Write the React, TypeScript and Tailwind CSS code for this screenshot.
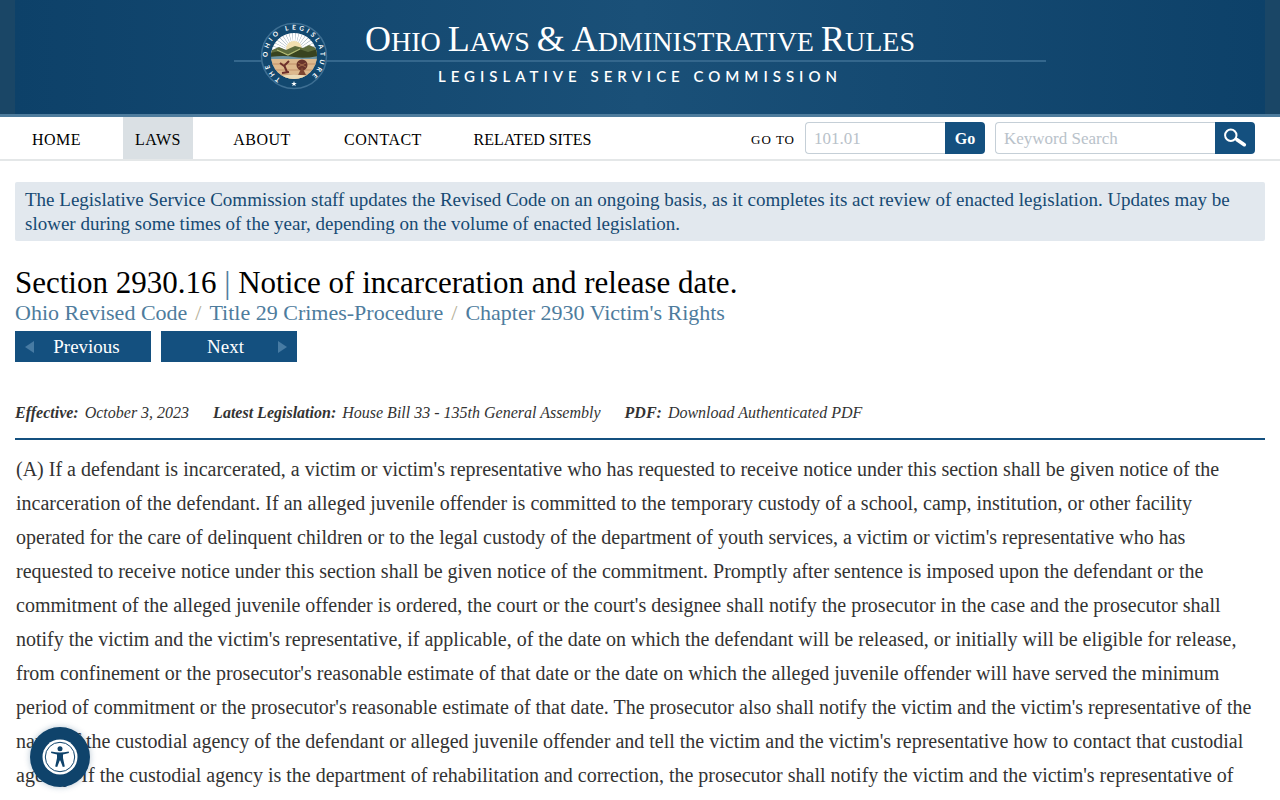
import type { ReactNode } from 'react';

const navItems = [
  { label: 'HOME', style: 'w-[73px] tracking-[0.5px]' },
  { label: 'LAWS', style: 'w-[70px] tracking-[0.5px] bg-[#dae0e4]' },
  { label: 'ABOUT', style: 'w-[78px] tracking-[0.5px]' },
  { label: 'CONTACT', style: 'w-[104px] tracking-[0.5px]' },
  { label: 'RELATED SITES', style: 'w-[135px]' },
];

const breadcrumbs = ['Ohio Revised Code', 'Title 29 Crimes-Procedure', "Chapter 2930 Victim's Rights"];

const details = [
  { label: 'Effective:', value: 'October 3, 2023' },
  { label: 'Latest Legislation:', value: 'House Bill 33 - 135th General Assembly' },
  { label: 'PDF:', value: 'Download Authenticated PDF', href: '#pdf' },
];

const rays = Array.from({ length: 19 }, (_, i) => 180 + i * 10);

const Seal = () => (
  <svg viewBox="0 0 68 68" className="absolute left-[26px] top-[22px] size-[68px]" aria-hidden="true">
    <defs>
      <clipPath id="disc">
        <circle cx="34" cy="34" r="23" />
      </clipPath>
      <path id="ring" d="M21.6 57.3 A26.4 26.4 0 1 1 46.4 57.3" />
    </defs>
    <circle cx="34" cy="34" r="32.5" fill="#12486f" stroke="#3e6f93" strokeWidth="1.5" />
    <g clipPath="url(#disc)">
      <rect x="10" y="10" width="48" height="48" fill="#7f95a6" />
      {rays.map((angle) => (
        <path key={angle} d="M34 30 L60 28 L60 32 Z" fill="#fff" transform={`rotate(${angle} 34 30)`} />
      ))}
      <circle cx="34" cy="27" r="8" fill="#f1dfb0" />
      <path d="M10 29 L19 25 L26 28 L35 24 L43 26 L49 23 L58 27 V38 H10 Z" fill="#5d6b3c" />
      <path d="M10 31 L20 29 L29 33 L39 27 L48 30 L58 27 V36 H10 Z" fill="#38431f" />
      <path d="M17 28 L28 33 L40 27" stroke="#b5bd77" strokeWidth="1.2" fill="none" />
      <path d="M10 35 Q24 33 34 35 T58 34 V38 H10 Z" fill="#6d94a3" />
      <rect x="10" y="37" width="48" height="22" fill="#ddb98d" />
      <path d="M10 42 H58 M12 48 H56 M18 53 H50" stroke="#bf8f68" strokeWidth="1" />
      <path d="M20 41 L24 44 L29 39 M24 43 L27 50 M22 51 L29 50" stroke="#6d2f2b" strokeWidth="2" fill="none" />
      <circle cx="42" cy="43" r="5.5" fill="#6a342b" />
      <path d="M42 45 L38 53 H46 Z" fill="#7d4631" />
      <path d="M38 41 L46 45 M38 45 L46 41" stroke="#a46b4b" strokeWidth="1" />
      <path d="M15 55 Q34 50 53 55 V59 H15 Z" fill="#eadbb8" />
    </g>
    <text fill="#fff" fontSize="6.5" fontWeight="700" fontFamily="Lato, sans-serif" letterSpacing="3">
      <textPath href="#ring" startOffset="1">THE OHIO LEGISLATURE</textPath>
    </text>
    <path d="M34 59 L34.7 61 H36.8 L35.1 62.3 L35.7 64.3 L34 63.1 L32.3 64.3 L32.9 62.3 L31.2 61 H33.3 Z" fill="#fff" />
  </svg>
);

const Cap = ({ children }: { children: ReactNode }) => <span className="text-4xl leading-9">{children}</span>;

const Header = () => (
  <header className="h-[117px] border-b-3 border-[#4e7c9d] bg-[#1a4666] px-[15px]">
    <div className="h-full bg-linear-to-r from-[#0d4169] via-[#1a5078] to-[#0d4169]">
      <div className="relative mx-auto h-full max-w-[812px] text-center text-white">
        <div className="absolute inset-x-0 top-[60px] h-0.5 bg-[#34678d]" />
        <Seal />
        <h1 className="pt-[21px] text-[28px] leading-9 whitespace-nowrap">
          <Cap>O</Cap>HIO <Cap>L</Cap>AWS <Cap>&amp;</Cap> <Cap>A</Cap>DMINISTRATIVE <Cap>R</Cap>ULES
        </h1>
        <p className="mt-1.5 font-[Lato,sans-serif] text-[15px] leading-5 font-semibold tracking-[5px]">
          LEGISLATIVE SERVICE COMMISSION
        </p>
      </div>
    </div>
  </header>
);

const Navigation = () => (
  <div className="flex h-11 items-center justify-between border-b-2 border-[#e4e7e8] pr-[25px] pl-5">
    <nav className="flex h-full gap-[30px]">
      {navItems.map((item) => (
        <a
          key={item.label}
          href="#nav"
          className={`flex items-center justify-center pt-[3px] text-base whitespace-nowrap text-black ${item.style}`}
        >
          {item.label}
        </a>
      ))}
    </nav>
    <div className="flex items-center gap-2.5">
      <form className="flex items-center" onSubmit={(e) => e.preventDefault()}>
        <label htmlFor="goto" className="mr-2.5 pt-[3px] text-[13px] tracking-[1px] text-black">GO TO</label>
        <input
          id="goto"
          placeholder="101.01"
          className="h-8 w-[140px] rounded-l-sm border border-r-0 border-[#c5cfd7] px-2 pt-0.5 text-[17px] placeholder:text-[#b9c2ca]"
        />
        <button className="h-8 w-10 rounded-r-sm bg-[#14507f] pt-0.5 text-base font-bold text-white">Go</button>
      </form>
      <form className="flex items-center" onSubmit={(e) => e.preventDefault()}>
        <input
          aria-label="Keyword Search"
          placeholder="Keyword Search"
          className="h-8 w-[220px] rounded-l-sm border border-r-0 border-[#c5cfd7] px-2 pt-0.5 text-[17px] placeholder:text-[#b9c2ca]"
        />
        <button aria-label="Search" className="flex h-8 w-10 items-center justify-center rounded-r-sm bg-[#14507f]">
          <svg viewBox="0 0 24 20" className="h-5 w-6" fill="none" stroke="#fff">
            <circle cx="7.8" cy="7.3" r="5.7" strokeWidth="2" />
            <path d="M12.5 10.5 L15 12.2" strokeWidth="2.5" />
            <path d="M14 11.8 L21.3 16.7" strokeWidth="3.6" strokeLinecap="round" />
          </svg>
        </button>
      </form>
    </div>
  </div>
);

const AccessibilityButton = () => (
  <button
    aria-label="Accessibility"
    className="fixed bottom-[13px] left-[30px] size-[60px] rounded-full bg-[#0f436b] shadow-[0_0_6px_rgba(15,67,107,0.3)]"
  >
    <svg viewBox="0 0 60 60" className="size-full">
      <circle cx="30" cy="30" r="17.5" fill="#fff" />
      <circle cx="30" cy="30" r="14.7" fill="none" stroke="#0f436b" strokeWidth="1" />
      <circle cx="30" cy="21.7" r="2.5" fill="#0f436b" />
      <path
        d="M21.3 24.5 Q30 26.5 38.7 24.5 L39 26 L33 27.5 V31 L34.8 39.5 L32.8 40 L30.3 33.5 H29.7 L27.2 40 L25.2 39.5 L27 31 V27.5 L21 26 Z"
        fill="#0f436b"
      />
    </svg>
  </button>
);

export default function App() {
  return (
    <div className="min-h-screen bg-white font-['Liberation_Serif',serif] text-[#333]">
      <Header />
      <Navigation />
      <main className="px-[15px] pt-[21px]">
        <div className="rounded-xs bg-[#e2e8ee] px-2.5 pt-1.5 pb-[5px] text-[19px] leading-6 text-[#164a73]">
          The Legislative Service Commission staff updates the Revised Code on an ongoing basis, as it completes its act
          review of enacted legislation. Updates may be slower during some times of the year, depending on the volume of
          enacted legislation.
        </div>

        <h2 className="mt-6 text-[31px] leading-9 text-black">
          Section 2930.16 <span className="text-[#4e7c9d]">|</span> Notice of incarceration and release date.
        </h2>
        <nav className="flex text-[22px] leading-6 text-[#4e7c9d]" aria-label="Breadcrumb">
          {breadcrumbs.map((crumb, i) => (
            <span key={crumb}>
              {i > 0 && <span className="mx-2 text-[#b5b09a]">/</span>}
              <a href="#crumb">{crumb}</a>
            </span>
          ))}
        </nav>
        <div className="mt-1.5 flex gap-2.5 text-[19px] text-white">
          <button className="flex h-[31px] w-[136px] items-center justify-between bg-[#14507f] px-2.5">
            <svg viewBox="0 0 9 12" className="h-3 w-[9px]"><path d="M9 0 V12 L0 6 Z" fill="#477ba3" /></svg>
            <span className="pt-0.5">Previous</span>
            <span className="w-0.5" />
          </button>
          <button className="flex h-[31px] w-[136px] items-center justify-between bg-[#14507f] px-2.5">
            <span className="w-0.5" />
            <span className="pt-0.5">Next</span>
            <svg viewBox="0 0 9 12" className="h-3 w-[9px]"><path d="M0 0 V12 L9 6 Z" fill="#477ba3" /></svg>
          </button>
        </div>

        <div className="mt-[39px] flex gap-6 border-b-2 border-[#14507f] pb-[13px] text-base leading-6 italic">
          {details.map((detail) => (
            <div key={detail.label}>
              <strong className="mr-0.5">{detail.label}</strong>{' '}
              {detail.href ? <a href={detail.href}>{detail.value}</a> : detail.value}
            </div>
          ))}
        </div>

        <p className="pt-3 pr-1 pl-px text-xl leading-[34px]">
          (A) If a defendant is incarcerated, a victim or victim's representative who has requested to receive notice
          under this section shall be given notice of the incarceration of the defendant. If an alleged juvenile
          offender is committed to the temporary custody of a school, camp, institution, or other facility operated for
          the care of delinquent children or to the legal custody of the department of youth services, a victim or
          victim's representative who has requested to receive notice under this section shall be given notice of the
          commitment. Promptly after sentence is imposed upon the defendant or the commitment of the alleged juvenile
          offender is ordered, the court or the court's designee shall notify the prosecutor in the case and the
          prosecutor shall notify the victim and the victim's representative, if applicable, of the date on which the
          defendant will be released, or initially will be eligible for release, from confinement or the prosecutor's
          reasonable estimate of that date or the date on which the alleged juvenile offender will have served the
          minimum period of commitment or the prosecutor's reasonable estimate of that date. The prosecutor also shall
          notify the victim and the victim's representative of the name of the custodial agency of the defendant or
          alleged juvenile offender and tell the victim and the victim's representative how to contact that custodial
          agency. If the custodial agency is the department of rehabilitation and correction, the prosecutor shall
          notify the victim and the victim's representative of
        </p>
      </main>
      <AccessibilityButton />
    </div>
  );
}
